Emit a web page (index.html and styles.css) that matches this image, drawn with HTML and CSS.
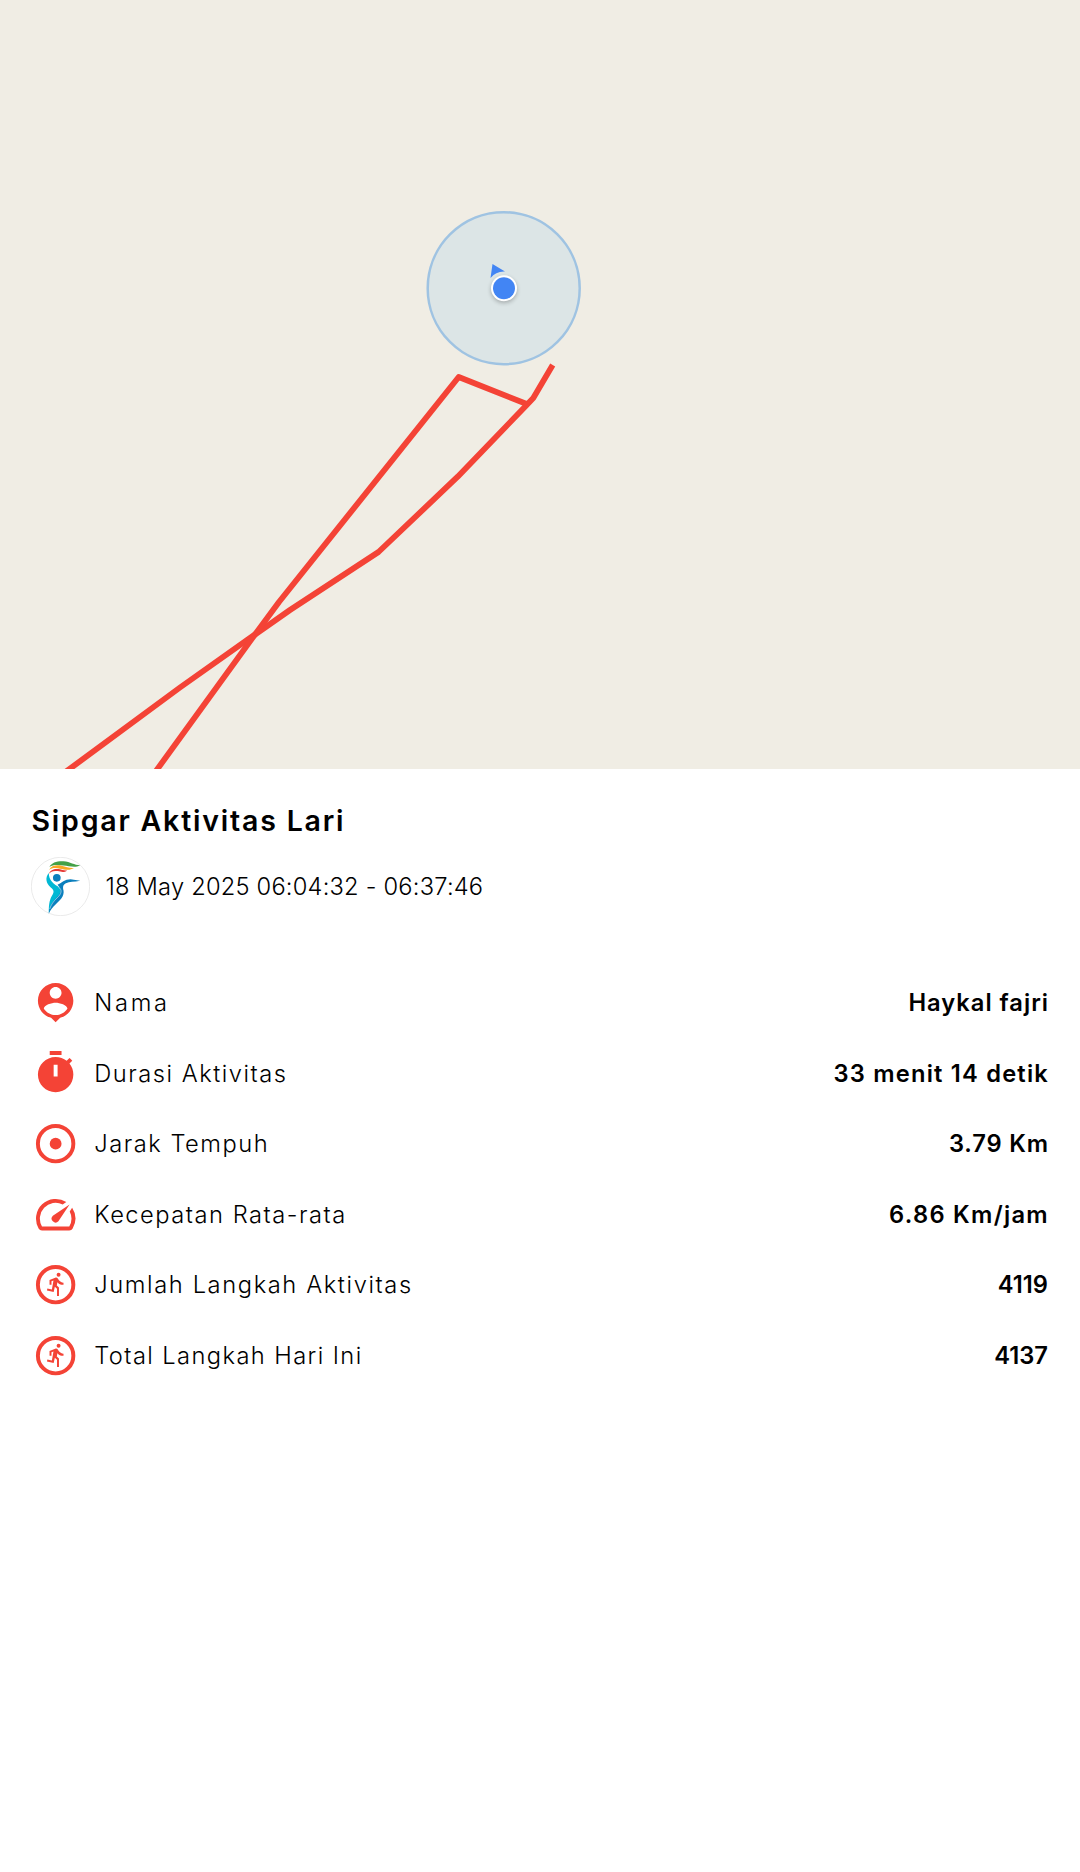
FILE: index.html
```html
<!DOCTYPE html>
<html lang="id">
<head>
  <meta charset="UTF-8">
  <meta name="viewport" content="width=device-width, initial-scale=1.0">
  <title>Sipgar Aktivitas Lari</title>
  <link rel="stylesheet" href="styles.css">
</head>
<body>

<!-- Peta rute -->
<svg class="peta" viewBox="0 0 1080 769">
  <circle class="akurasi" cx="503.7" cy="288.2" r="76"/>
  <path class="rute" d="M552.7 365L533.3 398L526.7 405L457.7 476.7L378.5 552L290 610L255 634.5L180 687.5L60 776"/>
  <path class="rute" d="M526.7 404L458.7 377L279 602L255 634.5L152 776.5"/>
  <path class="arah" d="M492.5 264L505 271.5Q496 271 490.5 278Z"/>
  <circle class="bayangan" cx="504" cy="290" r="13"/>
  <circle cx="504" cy="288.2" r="13" fill="#fff"/>
  <circle cx="504" cy="288.2" r="11" fill="#4285f4"/>
</svg>

<main class="detail">
  <h1>Sipgar Aktivitas Lari</h1>

  <div class="waktu">
    <svg class="logo" viewBox="19 21 176 176">
      <circle cx="107" cy="109" r="87" fill="#fff" stroke="#d4d4d4" stroke-width="1.5"/>
      <path fill="#43a047" d="M74 51C80 38 97 33 116 34C136 35 148 46 166 46C148 54 132 47 116 46C98 44 84 43 74 51Z"/>
      <path fill="#f9a825" d="M73 60C79 47 94 44 110 47C124 49 132 55 147 54C134 63 119 58 106 56C92 53 82 53 73 60Z"/>
      <path fill="#e53935" d="M72 72C76 59 89 55 102 57C112 59 118 62 127 61C118 68 108 65 99 63C86 61 78 64 72 72Z"/>
      <circle cx="96" cy="83" r="11.5" fill="#0b7fbd"/>
      <path fill="#00b8d4" d="M72 69C61 83 63 99 78 112C89 121 88 127 81 137C73 151 72 167 72 188C79 165 90 151 102 139C112 128 116 119 105 112C87 103 72 91 72 69Z"/>
      <path fill="#0b7fbd" d="M98 104C110 98 120 87 137 87L166 92C147 96 134 94 123 99C113 104 114 112 116 121C119 138 105 151 93 162C83 171 77 179 72 190C74 168 81 157 91 147C105 134 115 121 98 104Z"/>
      <path fill="none" stroke="#fff" stroke-width="1.5" d="M100 110C114 119 110 131 97 143C86 153 79 163 75 176"/>
    </svg>
    <span>18 May 2025 06:04:32 - 06:37:46</span>
  </div>

  <ul class="daftar">
    <li>
      <svg class="ikon" viewBox="0 0 24 24"><path d="M12 2c-4.97 0-9 4.03-9 9 0 4.17 2.84 7.67 6.69 8.69L12 22l2.31-2.31C18.16 18.67 21 15.17 21 11c0-4.97-4.03-9-9-9zm0 2c1.66 0 3 1.34 3 3s-1.34 3-3 3-3-1.34-3-3 1.34-3 3-3zm0 14.3c-2.5 0-4.71-1.28-6-3.22.03-1.99 4-3.08 6-3.08 1.99 0 5.97 1.09 6 3.08-1.29 1.94-3.5 3.22-6 3.22z"/></svg>
      <span class="label nama">Nama</span>
      <b class="nilai v-nama">Haykal fajri</b>
    </li>
    <li>
      <svg class="ikon" viewBox="0 0 24 24"><path fill-rule="evenodd" d="M15 1H9v2h6V1zm-4 13h2V8h-2v6zm8.03-6.61l1.42-1.42c-.43-.51-.9-.99-1.41-1.41l-1.42 1.42C16.07 4.74 14.12 4 12 4c-4.97 0-9 4.03-9 9s4.02 9 9 9 9-4.03 9-9c0-2.12-.74-4.07-1.97-5.61z"/></svg>
      <span class="label">Durasi Aktivitas</span>
      <b class="nilai">33 menit 14 detik</b>
    </li>
    <li>
      <svg class="ikon" viewBox="0 0 24 24"><circle class="cincin" cx="12" cy="12" r="9"/><circle cx="12" cy="12" r="3"/></svg>
      <span class="label">Jarak Tempuh</span>
      <b class="nilai v-jarak">3.79 Km</b>
    </li>
    <li>
      <svg class="ikon" viewBox="0 0 24 24"><path d="M20.38 8.57l-1.23 1.85a8 8 0 0 1-.22 7.58H5.07A8 8 0 0 1 15.58 6.85l1.85-1.23A10 10 0 0 0 3.35 19a2 2 0 0 0 1.72 1h13.85a2 2 0 0 0 1.74-1 10 10 0 0 0-.27-10.44zm-9.79 6.84a2 2 0 0 0 2.83 0l5.66-8.49-8.49 5.66a2 2 0 0 0 0 2.83z"/></svg>
      <span class="label">Kecepatan Rata-rata</span>
      <b class="nilai v-kecepatan">6.86 Km/jam</b>
    </li>
    <li>
      <svg class="ikon" viewBox="0 0 24 24">
        <circle class="cincin" cx="12" cy="12" r="9"/>
        <g id="pelari">
          <circle cx="13.5" cy="7" r="1"/>
          <path d="M16 12v-1c-1 0-1.9-.5-2.4-1.3l-.5-.8c-.2-.3-.5-.5-.9-.5-.1 0-.2 0-.4.1L8.9 9.6V12h1v-1.7l1-.4-.8 4.6-2.3-.5-.2 1 3.4.7.6-2.6 1.1 1v3.7h1v-4.4l-1.1-1 .3-1.6c.6.8 1.3 1.2 2.1 1.2z"/>
        </g>
      </svg>
      <span class="label langkah">Jumlah Langkah Aktivitas</span>
      <b class="nilai v-langkah">4119</b>
    </li>
    <li>
      <svg class="ikon" viewBox="0 0 24 24"><circle class="cincin" cx="12" cy="12" r="9"/><use href="#pelari"/></svg>
      <span class="label total">Total Langkah Hari Ini</span>
      <b class="nilai v-total">4137</b>
    </li>
  </ul>
</main>

</body>
</html>
```
FILE: styles.css
```css
body {
  margin: 0;
  background-color: #fff;
  color: #000;
  font-family: Inter, sans-serif;
}

/* Peta */
.peta {
  display: block;
  width: 100%;
  height: 769px;
  background-color: #f0ede4;
}
.akurasi {
  fill: #dce5e6;
  stroke: #9fc3e2;
  stroke-width: 2.5;
}
.rute {
  fill: none;
  stroke: #f44336;
  stroke-width: 5.8;
  stroke-linejoin: round;
}
.arah {
  fill: #4285f4;
}
.bayangan {
  fill: #000;
  opacity: 0.25;
  filter: blur(2px);
}

/* Detail aktivitas */
.detail {
  padding: 32px 31.5px;
}
h1 {
  margin: 0;
  font-size: 28.5px;
  line-height: 40px;
  font-weight: 600;
  letter-spacing: 1.8px;
}
.waktu {
  display: flex;
  align-items: center;
  gap: 15.5px;
  margin-top: 16px;
  margin-left: -0.5px;
  font-size: 23.7px;
  font-weight: 300;
  letter-spacing: 0.2px;
}
.logo {
  width: 59px;
  height: 59px;
}
.daftar {
  display: grid;
  gap: 23.4px;
  margin: 62.8px 0 0;
  padding: 0;
  list-style: none;
}
.daftar li {
  display: flex;
  align-items: center;
  height: 47.25px;
  font-size: 23.7px;
}
.ikon {
  width: 47.25px;
  height: 47.25px;
  margin-right: 15.5px;
  fill: #f44336;
}
.cincin {
  fill: none;
  stroke: #f44336;
  stroke-width: 2;
}
.label {
  font-weight: 300;
  letter-spacing: 1.5px;
}
.nilai {
  margin-left: auto;
  margin-right: -0.5px;
  font-weight: 600;
  letter-spacing: 1.2px;
}

/* Jarak huruf per baris */
.nama {
  letter-spacing: 2.7px;
}
.langkah {
  letter-spacing: 1.6px;
}
.total {
  letter-spacing: 1.4px;
}
.v-nama {
  letter-spacing: 1px;
}
.v-jarak {
  letter-spacing: 0.85px;
}
.v-kecepatan {
  letter-spacing: 1.3px;
}
.v-langkah,
.v-total {
  margin-right: 0.5px;
  letter-spacing: 0;
}
```
